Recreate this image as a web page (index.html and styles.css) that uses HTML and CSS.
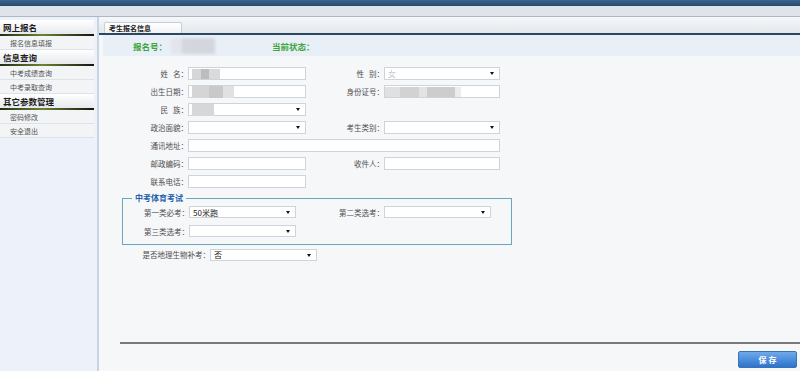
FILE: index.html
```html
<!DOCTYPE html>
<html lang="zh-CN">
<head>
  <meta charset="UTF-8" />
  <meta name="viewport" content="width=device-width, initial-scale=1.0"/>
  <title>考生报名信息</title>
  <link rel="stylesheet" href="styles.css">
</head>
<body>
  <div class="top-dark"></div>
  <div class="top-light"></div>

  <div class="main">
    <div class="sidebar">
      <div class="menu-head">网上报名</div>
      <div class="menu-item">报名信息填报</div>
      <div class="menu-head">信息查询</div>
      <div class="menu-item">中考成绩查询</div>
      <div class="menu-item">中考录取查询</div>
      <div class="menu-head">其它参数管理</div>
      <div class="menu-item">密码修改</div>
      <div class="menu-item">安全退出</div>
    </div>

    <div class="content">
      <div class="tabs">
        <div class="tab">考生报名信息</div>
      </div>

      <div class="status">
        <div class="status-item">报名号：<span class="mask mask-bmh"></span></div>
        <div class="status-item">当前状态：</div>
      </div>

      <div class="form">
        <div class="row">
          <label class="lbl">姓&nbsp;&nbsp;&nbsp;名：</label>
          <div class="field"><span class="mask mask-name"></span></div>
          <label class="lbl2">性&nbsp;&nbsp;&nbsp;别：</label>
          <div class="field sel short"><span class="faded">女</span></div>
        </div>
        <div class="row">
          <label class="lbl">出生日期：</label>
          <div class="field"><span class="mask mask-birth"></span></div>
          <label class="lbl2">身份证号：</label>
          <div class="field short"><span class="mask mask-id"></span></div>
        </div>
        <div class="row">
          <label class="lbl">民&nbsp;&nbsp;&nbsp;族：</label>
          <div class="field sel"><span class="mask mask-nation"></span></div>
        </div>
        <div class="row">
          <label class="lbl">政治面貌：</label>
          <div class="field sel"></div>
          <label class="lbl2">考生类别：</label>
          <div class="field sel short"></div>
        </div>
        <div class="row extra">
          <label class="lbl">通讯地址：</label>
          <div class="field wide"></div>
        </div>
        <div class="row">
          <label class="lbl">邮政编码：</label>
          <div class="field"></div>
          <label class="lbl2">收件人：</label>
          <div class="field short"></div>
        </div>
        <div class="row">
          <label class="lbl">联系电话：</label>
          <div class="field"></div>
        </div>

        <fieldset class="pe">
          <legend>中考体育考试</legend>
          <div class="pe-row">
            <label class="pe-lbl">第一类必考：</label>
            <div class="field sel pe-sel">50米跑</div>
            <label class="pe-lbl2">第二类选考：</label>
            <div class="field sel pe-sel"></div>
          </div>
          <div class="pe-row">
            <label class="pe-lbl">第三类选考：</label>
            <div class="field sel pe-sel"></div>
          </div>
        </fieldset>

        <div class="row makeup">
          <label class="lbl-long">是否地理生物补考：</label>
          <div class="field sel pe-sel">否</div>
        </div>
      </div>

      <div class="footer">
        <button class="save">保 存</button>
      </div>
    </div>
  </div>
</body>
</html>
```

FILE: styles.css
```css
* {
  box-sizing: border-box;
}

body {
  margin: 0;
  height: 371px;
  display: flex;
  flex-direction: column;
  font-family: "Noto Sans CJK SC", "Liberation Sans", sans-serif;
  font-size: 7.5px;
  color: #4f4f4f;
  background: #f6f7f9;
  overflow: hidden;
}

.top-dark {
  height: 6px;
  background: linear-gradient(#3f658c, #284a6e);
}

.top-light {
  height: 11px;
  background: #dfe4ea;
  border-bottom: 1px solid #aeb8c4;
}

.main {
  flex: 1;
  display: flex;
}

/* left menu */
.sidebar {
  width: 99px;
  padding-top: 3px;
  background: #edf2fa;
  border-right: 2px solid #c8d4e1;
}

.menu-head {
  height: 16px;
  line-height: 14px;
  padding-left: 3px;
  font-size: 8.5px;
  font-weight: bold;
  color: #1c1c1c;
  background: linear-gradient(#ffffff, #e6e9ed);
  border-bottom: 2px solid #1e2412;
  border-image: linear-gradient(to right, #1f2a14, #6f8232 45%, #3a4420 75%, #111) 1;
  margin-right: 3px;
}

.menu-item {
  height: 14px;
  line-height: 14px;
  padding-left: 10px;
  font-size: 7px;
  color: #555;
  background: #f2f4f6;
  border-bottom: 1px solid #dde2e8;
  margin-right: 3px;
}

/* content */
.content {
  flex: 1;
  display: flex;
  flex-direction: column;
}

.tabs {
  height: 18px;
  display: flex;
  align-items: flex-end;
  padding-left: 5px;
  background: linear-gradient(#f6f8fa, #e2e7eb);
  border-bottom: 2px solid #2c4760;
}

.tab {
  width: 78px;
  height: 11px;
  line-height: 10px;
  padding-left: 4px;
  font-size: 7px;
  font-weight: bold;
  color: #222;
  background: linear-gradient(#ffffff, #f1f2f4);
  border: 1px solid #c9ced4;
  border-bottom: none;
  border-radius: 2px 2px 0 0;
}

.status {
  height: 21px;
  margin-left: 4px;
  padding-left: 30px;
  display: flex;
  align-items: center;
  background: #e9eff7;
  font-size: 8.5px;
  font-weight: bold;
  color: #3aa53a;
}

.status-item {
  width: 139px;
  display: flex;
  align-items: center;
}

.form {
  padding-top: 11px;
}

.row {
  height: 13px;
  margin-bottom: 5px;
  display: flex;
  align-items: center;
}

.row.extra {
  margin-top: 3px;
}

.lbl {
  width: 89px;
  text-align: right;
}

.lbl2 {
  width: 78px;
  text-align: right;
}

.lbl-long {
  width: 111px;
  text-align: right;
}

.field {
  position: relative;
  width: 118px;
  height: 13px;
  padding-left: 3px;
  display: flex;
  align-items: center;
  background: #fff;
  border: 1px solid #cfd4da;
  font-size: 8px;
  color: #222;
}

.field.short {
  width: 116px;
}

.field.wide {
  width: 312px;
}

.sel::after {
  content: "";
  position: absolute;
  right: 5px;
  top: 4px;
  border-left: 2px solid transparent;
  border-right: 2px solid transparent;
  border-top: 3px solid #111;
}

/* blurred personal data */
.mask {
  display: inline-block;
  height: 10px;
  filter: blur(0.6px);
}

.mask-bmh {
  width: 44px;
  height: 16px;
  margin-left: 4px;
  background: linear-gradient(to right, #e2e6ec 0 25%, #d3d7dd 25%);
  filter: blur(1.5px);
}

.mask-name {
  width: 28px;
  background: linear-gradient(to right, #d6d6d6 0 32%, #bdbdbd 32% 62%, #dadada 62%);
}

.mask-birth {
  width: 42px;
  height: 12px;
  background: linear-gradient(to right, #d5d5d5 0 40%, #c9c9c9 40% 75%, #e1e1e1 75%);
}

.mask-nation {
  width: 22px;
  height: 12px;
  background: #d7d7d7;
}

.mask-id {
  width: 76px;
  margin-left: -3px;
  background: linear-gradient(to right, #e0e0e0 0 20%, #d2d2d2 20% 45%, #e3e3e3 45% 55%, #cdcdcd 55% 92%, #ececec 92%);
}

.faded {
  color: #c8c8c8;
  filter: blur(0.7px);
}

/* physical exam block */
.pe {
  width: 390px;
  margin: 2px 0 0 23px;
  padding: 3px 0 0 0;
  border: 1px solid #6aa7bf;
}

.pe legend {
  margin-left: 9px;
  padding: 0 3px;
  height: 10px;
  line-height: 10px;
  font-size: 8px;
  font-weight: bold;
  color: #1f62ae;
}

.pe-row {
  height: 12px;
  margin-bottom: 7px;
  display: flex;
  align-items: center;
}

.pe-lbl {
  width: 66px;
  text-align: right;
}

.pe-lbl2 {
  width: 88px;
  text-align: right;
}

.field.pe-sel {
  width: 107px;
  height: 12px;
}

.row.makeup {
  margin-top: 3px;
}

/* bottom bar */
.footer {
  margin-top: auto;
  margin-left: 21px;
  padding: 7px 3px 3px 0;
  display: flex;
  justify-content: flex-end;
  border-top: 2px solid #7a7a7a;
}

.save {
  width: 59px;
  height: 17px;
  padding: 0;
  font-family: "Noto Sans CJK SC", serif;
  font-size: 8px;
  font-weight: bold;
  color: #fff;
  background: linear-gradient(#6fa9ea, #2d73cc);
  border: 1px solid #3a72b5;
  border-radius: 2px;
  cursor: pointer;
}
```
